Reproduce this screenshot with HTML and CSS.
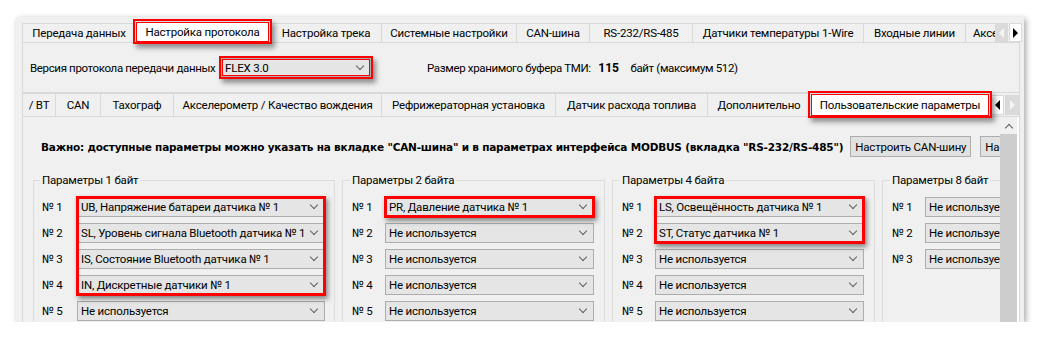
FILE: index.html
```html
<!DOCTYPE html>
<html lang="ru">
<head>
    <meta charset="UTF-8">
    <title>Настройка протокола</title>
    <link rel="stylesheet" href="styles.css">
</head>
<body>
    <div class="window">
        <div class="tabbar">
            <div class="tab" style="width:113px">Передача данных</div>
            <div class="tab active hl" style="width:135px">Настройка протокола</div>
            <div class="tab" style="width:111px">Настройка трека</div>
            <div class="tab" style="width:135px">Системные настройки</div>
            <div class="tab" style="width:73px">CAN-шина</div>
            <div class="tab" style="width:103px">RS-232/RS-485</div>
            <div class="tab" style="width:171px">Датчики температуры 1-Wire</div>
            <div class="tab" style="width:102px">Входные линии</div>
            <div class="tab cut" style="width:30px">Аксессуары</div>
            <div class="arrows">
                <span class="arr off"><i class="tri left"></i></span>
                <span class="arr"><i class="tri right"></i></span>
            </div>
        </div>

        <div class="page">
            <div class="proto">
                <span class="lbl">Версия протокола передачи данных</span>
                <div class="combo flex hl"><span>FLEX 3.0</span></div>
                <span class="buf">Размер хранимого буфера ТМИ: <b>115</b> байт (максимум 512)</span>
            </div>

            <div class="tabbar sub">
                <div class="tab first" style="width:33px">/ BT</div>
                <div class="tab" style="width:45px">CAN</div>
                <div class="tab" style="width:73px">Тахограф</div>
                <div class="tab" style="width:208px">Акселерометр / Качество вождения</div>
                <div class="tab" style="width:174px">Рефрижераторная установка</div>
                <div class="tab" style="width:152px">Датчик расхода топлива</div>
                <div class="tab" style="width:103px">Дополнительно</div>
                <div class="tab active hl" style="width:180px">Пользовательские параметры</div>
                <div class="arrows">
                    <span class="arr"><i class="tri left"></i></span>
                    <span class="arr off"><i class="tri right"></i></span>
                </div>
            </div>

            <div class="subpage">
                <div class="scroll">
                    <div class="note">
                        <b>Важно: доступные параметры можно указать на вкладке "CAN-шина" и в параметрах интерфейса MODBUS (вкладка "RS-232/RS-485")</b>
                        <button>Настроить CAN-шину</button>
                        <button>Настроить RS-232/RS-485</button>
                    </div>

                    <div class="groups">
                        <fieldset class="group g1">
                            <legend>Параметры 1 байт</legend>
                            <label>№ 1</label><div class="combo"><span>UB, Напряжение батареи датчика № 1</span></div>
                            <label>№ 2</label><div class="combo"><span>SL, Уровень сигнала Bluetooth датчика № 1</span></div>
                            <label>№ 3</label><div class="combo"><span>IS, Состояние Bluetooth датчика № 1</span></div>
                            <label>№ 4</label><div class="combo"><span>IN, Дискретные датчики № 1</span></div>
                            <label>№ 5</label><div class="combo"><span>Не используется</span></div>
                            <div class="mark" style="grid-row:1 / span 4"></div>
                        </fieldset>

                        <fieldset class="group">
                            <legend>Параметры 2 байта</legend>
                            <label>№ 1</label><div class="combo"><span>PR, Давление датчика № 1</span></div>
                            <label>№ 2</label><div class="combo"><span>Не используется</span></div>
                            <label>№ 3</label><div class="combo"><span>Не используется</span></div>
                            <label>№ 4</label><div class="combo"><span>Не используется</span></div>
                            <label>№ 5</label><div class="combo"><span>Не используется</span></div>
                            <div class="mark" style="grid-row:1 / span 1"></div>
                        </fieldset>

                        <fieldset class="group">
                            <legend>Параметры 4 байта</legend>
                            <label>№ 1</label><div class="combo"><span>LS, Освещённость датчика № 1</span></div>
                            <label>№ 2</label><div class="combo"><span>ST, Статус датчика № 1</span></div>
                            <label>№ 3</label><div class="combo"><span>Не используется</span></div>
                            <label>№ 4</label><div class="combo"><span>Не используется</span></div>
                            <label>№ 5</label><div class="combo"><span>Не используется</span></div>
                            <div class="mark" style="grid-row:1 / span 2"></div>
                        </fieldset>

                        <fieldset class="group">
                            <legend>Параметры 8 байт</legend>
                            <label>№ 1</label><div class="combo"><span>Не используется</span></div>
                            <label>№ 2</label><div class="combo"><span>Не используется</span></div>
                            <label>№ 3</label><div class="combo"><span>Не используется</span></div>
                        </fieldset>
                    </div>
                </div>
                <div class="vscroll">
                    <div class="up"><i class="chev-up"></i></div>
                    <div class="thumb"></div>
                </div>
            </div>
        </div>
    </div>
</body>
</html>
```

FILE: styles.css
```css
body {
    margin: 0;
    background: #fff;
    font-family: Roboto, "Noto Sans", sans-serif;
    font-size: 11.5px;
    letter-spacing: -0.2px;
    color: #000;
    overflow: hidden;
}
.window {
    margin: 17px 0 0 16px;
    width: 1008px;
    height: 305px;
    box-sizing: border-box;
    padding: 6px 4px 0 6px;
    background: #f0f0f0;
    box-shadow: 2px 2px 6px rgba(0,0,0,0.35);
    display: flex;
    flex-direction: column;
    overflow: hidden;
}

/* вкладки */
.tabbar {
    display: flex;
    height: 19px;
    flex: none;
}
.tab {
    flex: none;
    box-sizing: border-box;
    display: flex;
    align-items: center;
    justify-content: center;
    border-top: 1px solid #d9d9d9;
    border-left: 1px solid #d9d9d9;
    background: #f0f0f0;
    white-space: nowrap;
    overflow: hidden;
}
.tab.cut {
    justify-content: flex-start;
    padding-left: 7px;
}
.tab.active {
    background: #fff;
    margin-top: -2px;
    height: 21px;
    border-right: 1px solid #d9d9d9;
    position: relative;
    z-index: 2;
}
.hl {
    box-shadow: 0 0 0 2px #f00, inset 0 0 0 1px #f00, 3px 4px 5px 2px rgba(0,0,0,0.4);
}
.arrows {
    display: flex;
    gap: 1px;
    margin-left: auto;
}
.arr {
    width: 13px;
    height: 19px;
    box-sizing: border-box;
    border: 1px solid #d9d9d9;
    background: #fff;
    display: flex;
    align-items: center;
    justify-content: center;
}
.arr.off {
    background: #dadada;
}
.tri {
    width: 0;
    height: 0;
    border-top: 5px solid transparent;
    border-bottom: 5px solid transparent;
}
.tri.left { border-right: 5px solid #000; }
.tri.right { border-left: 5px solid #000; }
.arr.off .tri.left { border-right-color: #f4f4f4; }
.arr.off .tri.right { border-left-color: #f4f4f4; }

.page {
    flex: 1;
    min-height: 0;
    border-top: 1px solid #d9d9d9;
    border-left: 1px solid #d9d9d9;
    border-right: 1px solid #d9d9d9;
    display: flex;
    flex-direction: column;
}
.proto {
    height: 49px;
    flex: none;
    display: flex;
    align-items: center;
    padding-left: 7px;
    white-space: nowrap;
    letter-spacing: -0.35px;
}
.proto .lbl {
    width: 191px;
}
.buf {
    margin-left: 56px;
}
.buf b {
    margin: 0 9px 0 5px;
    font-size: 12px;
    letter-spacing: 0;
}

/* комбобоксы */
.combo {
    box-sizing: border-box;
    height: 20px;
    border: 1px solid #adadad;
    background: #e5e5e5;
    display: flex;
    align-items: center;
    padding-left: 3px;
    white-space: nowrap;
    overflow: hidden;
    letter-spacing: -0.2px;
}
.combo span {
    flex: 1;
    overflow: hidden;
}
.combo::after {
    content: "";
    flex: none;
    width: 5px;
    height: 5px;
    border-right: 1px solid #606060;
    border-bottom: 1px solid #606060;
    transform: rotate(45deg);
    margin: -4px 7px 0 5px;
}
.combo.flex {
    width: 150px;
    height: 19px;
}

.sub {
    height: 23px;
    border-top: 1px solid #d9d9d9;
    margin-left: -1px;
}
.sub .tab.active {
    height: 23px;
    margin-top: 0;
}
.sub .arrows {
    align-self: center;
}
.sub .arr {
    height: 20px;
    width: 14px;
}

.subpage {
    flex: 1;
    min-height: 0;
    display: flex;
    border-top: 1px solid #d9d9d9;
    margin-left: -1px;
    border-left: 1px solid #d9d9d9;
}
.scroll {
    flex: 1;
    min-width: 0;
    overflow: hidden;
    padding-top: 19px;
}
.note {
    display: flex;
    align-items: center;
    white-space: nowrap;
    padding-left: 18px;
}
.note b {
    font-family: "DejaVu Sans", sans-serif;
    font-size: 10.5px;
    letter-spacing: -0.2px;
}
button {
    flex: none;
    font-family: inherit;
    font-size: 11.5px;
    letter-spacing: -0.2px;
    height: 21px;
    padding: 0 4px;
    margin-left: 7px;
    background: #e1e1e1;
    border: 1px solid #adadad;
    border-radius: 0;
}
button + button {
    margin-left: 9px;
}

.groups {
    display: flex;
    gap: 7px;
    padding: 16px 0 0 10px;
}
.group {
    flex: none;
    margin: 0;
    border: 1px solid #dcdcdc;
    padding: 10px 9px 20px 8px;
    display: grid;
    grid-template-columns: 35px 248px;
    grid-auto-rows: 20px;
    row-gap: 6px;
    align-items: center;
}
.group legend {
    padding: 0 2px;
    margin-left: -2px;
}
.group:not(.g1) {
    grid-template-columns: 33px 209px;
    padding-left: 9px;
    padding-right: 10px;
}
.group label { grid-column: 1; }
.group .combo { grid-column: 2; }
.group label:nth-of-type(1), .group div.combo:nth-of-type(1) { grid-row: 1; }
.group label:nth-of-type(2), .group div.combo:nth-of-type(2) { grid-row: 2; }
.group label:nth-of-type(3), .group div.combo:nth-of-type(3) { grid-row: 3; }
.group label:nth-of-type(4), .group div.combo:nth-of-type(4) { grid-row: 4; }
.group label:nth-of-type(5), .group div.combo:nth-of-type(5) { grid-row: 5; }
.mark {
    grid-column: 2;
    align-self: stretch;
    margin: -1px;
    border: 3px solid #f00;
    box-shadow: 2px 3px 5px rgba(0,0,0,0.45);
    z-index: 1;
}

/* полоса прокрутки */
.vscroll {
    width: 17px;
    flex: none;
    display: flex;
    flex-direction: column;
    border-right: 2px solid #fff;
}
.up {
    height: 17px;
    display: flex;
    align-items: center;
    justify-content: center;
}
.chev-up {
    width: 5px;
    height: 5px;
    border-left: 1.5px solid #606060;
    border-top: 1.5px solid #606060;
    transform: rotate(45deg);
    margin-top: 4px;
}
.thumb {
    flex: 1;
    background: #cdcdcd;
}
```
